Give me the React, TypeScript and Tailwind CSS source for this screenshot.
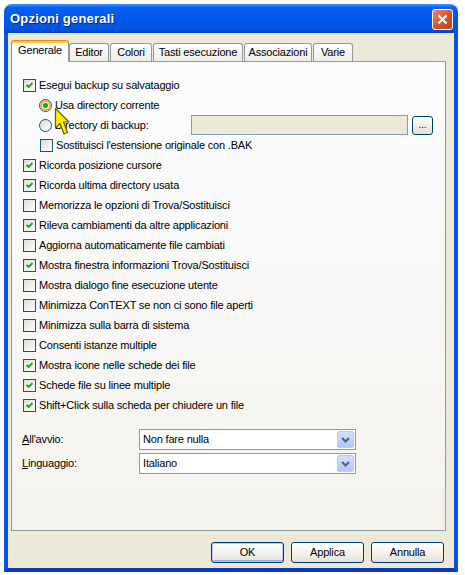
import React from 'react'

const FONT = { fontFamily: '"Liberation Sans", Arial, sans-serif' }

function Check({ on }: { on?: boolean }) {
  return (
    <span className="relative shrink-0 w-[13px] h-[13px] border border-[#1c5180] bg-gradient-to-br from-[#dcdcd7] to-white">
      {on && (
        <svg className="absolute left-[2px] top-[2px]" width="7" height="7" viewBox="0 0 7 7">
          <polyline points="0.6,3 2.6,5 6.4,1.2" fill="none" stroke="#21a121" strokeWidth="1.9" />
        </svg>
      )}
    </span>
  )
}

function Radio({ on, hover }: { on?: boolean; hover?: boolean }) {
  return (
    <span className="relative shrink-0 flex items-center justify-center w-[13px] h-[13px] rounded-full border border-[#1c5180] bg-gradient-to-br from-[#dcdcd7] to-white">
      {hover && <span className="absolute inset-0 rounded-full border-2 border-[#f8b330]" />}
      {on && <span className="relative w-[5px] h-[5px] rounded-full bg-[#21a121]" />}
    </span>
  )
}

function Row({ on, label, indent }: { on?: boolean; label: string; indent?: boolean }) {
  return (
    <div className={'flex items-center h-[20px] gap-[3px] ' + (indent ? 'pl-[17px]' : '')}>
      <Check on={on} />
      <span>{label}</span>
    </div>
  )
}

function Combo({ value }: { value: string }) {
  return (
    <div className="flex items-center w-[217px] h-[21px] border border-[#7f9db9] bg-white pl-[3px] pr-[1px]">
      <span className="flex-1">{value}</span>
      <span className="flex items-center justify-center w-[17px] h-[17px] rounded-[2px] border border-[#b9ccf8] bg-gradient-to-b from-[#d2defc] to-[#b3c8f6]">
        <svg width="9" height="6" viewBox="0 0 9 6">
          <polyline points="1,1 4.5,4.5 8,1" fill="none" stroke="#4d6185" strokeWidth="2" />
        </svg>
      </span>
    </div>
  )
}

function Btn({ label, def }: { label: string; def?: boolean }) {
  return (
    <button
      className={
        'w-[73px] h-[21px] rounded-[3px] border border-[#003c74] bg-gradient-to-b from-white via-[#f5f4f0] to-[#e3e0d6] text-black ' +
        (def ? 'shadow-[inset_0_0_0_1px_#b6cdf5,inset_0_-1px_0_1px_#8fb0ec]' : '')
      }
    >
      {label}
    </button>
  )
}

const tabs = [
  { label: 'Editor', w: 'w-[40px]', ml: '' },
  { label: 'Colori', w: 'w-[42px]', ml: 'ml-[1px]' },
  { label: 'Tasti esecuzione', w: 'w-[90px]', ml: 'ml-[1px]' },
  { label: 'Associazioni', w: 'w-[68px]', ml: 'ml-[1px]' },
  { label: 'Varie', w: 'w-[40px]', ml: 'ml-[1px]' },
]

export default function App() {
  return (
    <div
      className="relative w-[465px] h-[575px] bg-white pt-[4px] pl-[4px] text-[11px] tracking-[-0.18px] text-black"
      style={FONT}
    >
      <div className="flex flex-col w-[454px] h-[568px]">
        {/* title bar */}
        <div className="flex items-center h-[29px] rounded-t-[8px] pl-[6px] pr-[5px] bg-[linear-gradient(to_bottom,#3f95fb_0%,#0a62f0_12%,#0058ee_45%,#0053e1_85%,#0046cb_100%)]">
          <span className="flex-1 text-white font-bold text-[13px] tracking-[0.2px] [text-shadow:1px_1px_0_#0c1f8a]">
            Opzioni generali
          </span>
          <span className="mt-[1px] flex items-center justify-center w-[21px] h-[21px] rounded-[3px] border border-white bg-gradient-to-br from-[#e9856a] via-[#d9582f] to-[#c0401c]">
            <svg width="11" height="11" viewBox="0 0 11 11">
              <path d="M1.5 1.5 L9.5 9.5 M9.5 1.5 L1.5 9.5" stroke="white" strokeWidth="2" />
            </svg>
          </span>
        </div>

        {/* body */}
        <div className="flex-1 flex flex-col bg-[#ece9d8] border-x-4 border-b-4 border-x-[#0b55e6] border-b-[#0a38c0] pt-[7px] pl-[3px] pr-[8px]">
          {/* tabs */}
          <div className="flex items-end h-[21px]">
            <div className="relative z-10 -mb-px flex items-center justify-center w-[58px] h-[22px] rounded-t-[3px] border-x border-t border-x-[#919b9c] border-t-[#e68b2c] bg-[#fcfcfe] shadow-[inset_0_2px_0_#ffc73c] pb-[2px]">
              Generale
            </div>
            {tabs.map((t) => (
              <div
                key={t.label}
                className={
                  'flex items-center justify-center h-[18px] rounded-t-[3px] border-x border-t border-[#919b9c] bg-gradient-to-b from-white to-[#ecebe6] ' +
                  t.w +
                  ' ' +
                  t.ml
                }
              >
                {t.label}
              </div>
            ))}
          </div>

          {/* panel */}
          <div className="flex flex-col h-[470px] border border-[#919b9c] bg-gradient-to-b from-[#fcfcfe] to-[#f4f3ee] pt-[13px] pl-[11px] pr-[12px]">
            <Row on label="Esegui backup su salvataggio" />
            <div className="flex items-center h-[20px] gap-[3px] pl-[16px]">
              <Radio on hover />
              <span>Usa directory corrente</span>
            </div>
            <div className="flex items-center h-[20px] pl-[16px]">
              <Radio />
              <span className="flex-1 ml-[3px]">Directory di backup:</span>
              <span className="w-[217px] h-[20px] border border-[#7f9db9] bg-[#ece9d8]" />
              <button className="ml-[4px] w-[21px] h-[19px] rounded-[3px] border border-[#003c74] bg-gradient-to-b from-white to-[#e3e0d6] text-[10px] leading-none pb-[1px]">
                ...
              </button>
            </div>
            <Row indent label="Sostituisci l'estensione originale con .BAK" />
            <Row on label="Ricorda posizione cursore" />
            <Row on label="Ricorda ultima directory usata" />
            <Row label="Memorizza le opzioni di Trova/Sostituisci" />
            <Row on label="Rileva cambiamenti da altre applicazioni" />
            <Row label="Aggiorna automaticamente file cambiati" />
            <Row on label="Mostra finestra informazioni Trova/Sostituisci" />
            <Row label="Mostra dialogo fine esecuzione utente" />
            <Row label="Minimizza ConTEXT se non ci sono file aperti" />
            <Row label="Minimizza sulla barra di sistema" />
            <Row label="Consenti istanze multiple" />
            <Row on label="Mostra icone nelle schede dei file" />
            <Row on label="Schede file su linee multiple" />
            <Row on label="Shift+Click sulla scheda per chiudere un file" />

            <div className="flex items-center mt-[14px] -ml-px">
              <span className="w-[117px]">
                <span className="underline">A</span>ll'avvio:
              </span>
              <Combo value="Non fare nulla" />
            </div>
            <div className="flex items-center mt-[3px] -ml-px">
              <span className="w-[117px]">
                <span className="underline">L</span>inguaggio:
              </span>
              <Combo value="Italiano" />
            </div>
          </div>

          {/* buttons */}
          <div className="flex justify-end gap-[7px] mt-[11px] pr-[2px]">
            <Btn label="OK" def />
            <Btn label="Applica" />
            <Btn label="Annulla" />
          </div>
        </div>
      </div>

      {/* mouse pointer */}
      <svg className="absolute left-[54px] top-[107px]" width="16" height="30" viewBox="0 0 16 30">
        <path
          d="M1.5 1.5 L1.5 21 L6 16.5 L10 27 L13.5 25.5 L9.5 15 L15 15 Z"
          fill="#fff200"
          stroke="#6b5a00"
          strokeWidth="1.2"
          strokeLinejoin="round"
        />
      </svg>
    </div>
  )
}
